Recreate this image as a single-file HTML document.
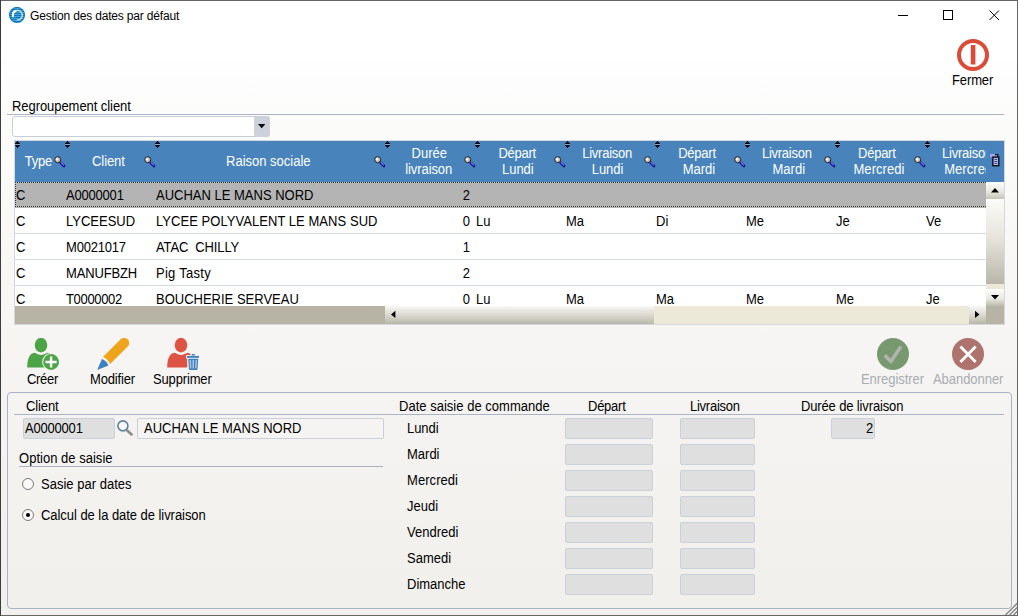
<!DOCTYPE html>
<html><head><meta charset="utf-8"><title>Gestion des dates par défaut</title>
<style>
*{box-sizing:border-box;margin:0;padding:0}
html,body{width:1018px;height:616px;overflow:hidden;background:linear-gradient(90deg,#3c3c40 0,#3c3c40 1px,#666 1px)}
body{font-family:"Liberation Sans",sans-serif;font-size:13px;color:#000;position:relative}
.abs{position:absolute}
#win{position:absolute;left:1px;top:1px;width:1016px;height:614px;background:linear-gradient(#fff 0,#fff 40px,#fbfbfa 130px,#f6f5f3 340px,#f4f3f1 430px,#f1f0ec 590px,#f1f0ec 614px)}
.t{position:absolute;white-space:nowrap;line-height:16px;height:16px;margin-top:1px;transform:scaleY(1.07);transform-origin:0 12.5px}
.hl{position:absolute;height:1px;background:#aab4c4}
.fld{position:absolute;height:21px;background:#dfdfdf;border:1px solid #c9d0da;border-radius:2px}
#hdr{position:absolute;left:15px;top:141px;width:989px;height:41px;background:#4884bb;color:#fff;overflow:hidden}
.hc{position:absolute;text-align:center;line-height:16px;height:16px;white-space:nowrap;color:#fff;transform:scaleY(1.07);transform-origin:0 12.5px}
.row{position:absolute;left:15px;width:971px;height:26px;background:#fff;border-bottom:1px solid #d3dae2;overflow:hidden}
.row span{position:absolute;top:6px;line-height:16px;height:16px;white-space:nowrap;transform:scaleY(1.07);transform-origin:0 12.5px}
</style></head><body>
<div id="win"></div>
<svg class="abs" style="left:9px;top:7px" width="16" height="16" viewBox="0 0 16 16"><defs><pattern id="st" width="16" height="2" patternUnits="userSpaceOnUse"><rect width="16" height="1" fill="#1577bd"/><rect y="1" width="16" height="1" fill="#3fa9da"/></pattern><clipPath id="ic"><circle cx="8" cy="8" r="8"/></clipPath></defs><circle cx="8" cy="8" r="8" fill="url(#st)"/><circle cx="8" cy="8" r="7.5" fill="none" stroke="#0f62a8" stroke-width="1" opacity=".55"/><path d="M3.8 9A4.8 4.8 0 1 1 7.7 12.9" fill="none" stroke="#fff" stroke-width="1.1" opacity=".9"/><path d="M4 9.2A4.6 4.6 0 0 1 6.6 4" fill="none" stroke="#fff" stroke-width="2" stroke-linecap="round"/></svg>
<div class="t" style="left:30px;top:7px;font-size:12px;letter-spacing:-0.18px">Gestion des dates par défaut</div>
<svg class="abs" style="left:890px;top:5px" width="120" height="22" viewBox="0 0 120 22" fill="none" stroke="#000" stroke-width="1"><path d="M8 10.5H18"/><rect x="53.5" y="5.5" width="9" height="9"/><path d="M99.5 5.5L109 15M109 5.5L99.5 15"/></svg>
<svg class="abs" style="left:957px;top:39px" width="32" height="32" viewBox="0 0 32 32"><circle cx="16" cy="16" r="14" fill="none" stroke="#dc4a38" stroke-width="4"/><rect x="13.8" y="6" width="4.6" height="19.5" fill="#dc4a38"/></svg>
<div class="t" style="left:952px;top:72px;letter-spacing:-0.12px">Fermer</div>
<div class="t" style="left:12px;top:98px;letter-spacing:-0.06px">Regroupement client</div>
<div class="hl" style="left:7px;top:114px;width:997px"></div>
<div class="abs" style="left:12px;top:116px;width:258px;height:21px;background:#fff;border:1px solid #c8ced8;border-radius:3px"></div>
<div class="abs" style="left:254px;top:116px;width:16px;height:21px;background:#cdd1d9;border-radius:3px"></div>
<svg class="abs" style="left:258px;top:124px" width="8" height="5"><path d="M0 0H7.4L3.7 4.2Z" fill="#000"/></svg>
<div class="abs" style="left:14px;top:140px;width:991px;height:185px;background:#d4d8de"></div>
<div id="hdr">
<svg class="abs" style="left:0px;top:0px" width="5" height="7" viewBox="0 0 5 7" shape-rendering="crispEdges"><path d="M2 0h1v1h1v1h1v1h-5v-1h1v-1h1z M0 4h5v1h-1v1h-1v1h-1v-1h-1v-1h-1z" fill="#0a0a14"/><path d="M0 3h5v1h-5z" fill="#8aa8c8"/></svg><svg class="abs" style="left:50px;top:0px" width="5" height="7" viewBox="0 0 5 7" shape-rendering="crispEdges"><path d="M2 0h1v1h1v1h1v1h-5v-1h1v-1h1z M0 4h5v1h-1v1h-1v1h-1v-1h-1v-1h-1z" fill="#0a0a14"/><path d="M0 3h5v1h-5z" fill="#8aa8c8"/></svg><svg class="abs" style="left:140px;top:0px" width="5" height="7" viewBox="0 0 5 7" shape-rendering="crispEdges"><path d="M2 0h1v1h1v1h1v1h-5v-1h1v-1h1z M0 4h5v1h-1v1h-1v1h-1v-1h-1v-1h-1z" fill="#0a0a14"/><path d="M0 3h5v1h-5z" fill="#8aa8c8"/></svg><svg class="abs" style="left:370px;top:0px" width="5" height="7" viewBox="0 0 5 7" shape-rendering="crispEdges"><path d="M2 0h1v1h1v1h1v1h-5v-1h1v-1h1z M0 4h5v1h-1v1h-1v1h-1v-1h-1v-1h-1z" fill="#0a0a14"/><path d="M0 3h5v1h-5z" fill="#8aa8c8"/></svg><svg class="abs" style="left:460px;top:0px" width="5" height="7" viewBox="0 0 5 7" shape-rendering="crispEdges"><path d="M2 0h1v1h1v1h1v1h-5v-1h1v-1h1z M0 4h5v1h-1v1h-1v1h-1v-1h-1v-1h-1z" fill="#0a0a14"/><path d="M0 3h5v1h-5z" fill="#8aa8c8"/></svg><svg class="abs" style="left:550px;top:0px" width="5" height="7" viewBox="0 0 5 7" shape-rendering="crispEdges"><path d="M2 0h1v1h1v1h1v1h-5v-1h1v-1h1z M0 4h5v1h-1v1h-1v1h-1v-1h-1v-1h-1z" fill="#0a0a14"/><path d="M0 3h5v1h-5z" fill="#8aa8c8"/></svg><svg class="abs" style="left:640px;top:0px" width="5" height="7" viewBox="0 0 5 7" shape-rendering="crispEdges"><path d="M2 0h1v1h1v1h1v1h-5v-1h1v-1h1z M0 4h5v1h-1v1h-1v1h-1v-1h-1v-1h-1z" fill="#0a0a14"/><path d="M0 3h5v1h-5z" fill="#8aa8c8"/></svg><svg class="abs" style="left:730px;top:0px" width="5" height="7" viewBox="0 0 5 7" shape-rendering="crispEdges"><path d="M2 0h1v1h1v1h1v1h-5v-1h1v-1h1z M0 4h5v1h-1v1h-1v1h-1v-1h-1v-1h-1z" fill="#0a0a14"/><path d="M0 3h5v1h-5z" fill="#8aa8c8"/></svg><svg class="abs" style="left:820px;top:0px" width="5" height="7" viewBox="0 0 5 7" shape-rendering="crispEdges"><path d="M2 0h1v1h1v1h1v1h-5v-1h1v-1h1z M0 4h5v1h-1v1h-1v1h-1v-1h-1v-1h-1z" fill="#0a0a14"/><path d="M0 3h5v1h-5z" fill="#8aa8c8"/></svg><svg class="abs" style="left:910px;top:0px" width="5" height="7" viewBox="0 0 5 7" shape-rendering="crispEdges"><path d="M2 0h1v1h1v1h1v1h-5v-1h1v-1h1z M0 4h5v1h-1v1h-1v1h-1v-1h-1v-1h-1z" fill="#0a0a14"/><path d="M0 3h5v1h-5z" fill="#8aa8c8"/></svg><div class="hc" style="left:-36.6px;top:13px;width:120px;letter-spacing:-0.23px">Type</div><div class="hc" style="left:33.4px;top:13px;width:120px;letter-spacing:-0.1px">Client</div><div class="hc" style="left:193.3px;top:13px;width:120px;letter-spacing:0px">Raison sociale</div><div class="hc" style="left:354.3px;top:5px;width:120px">Durée</div><div class="hc" style="left:353.7px;top:21px;width:120px;letter-spacing:-0.08px">livraison</div><div class="hc" style="left:442.2px;top:5px;width:120px;letter-spacing:-0.25px">Départ</div><div class="hc" style="left:442.8px;top:21px;width:120px;letter-spacing:-0.05px">Lundi</div><div class="hc" style="left:532.1px;top:5px;width:120px;letter-spacing:-0.25px">Livraison</div><div class="hc" style="left:532.5px;top:21px;width:120px;letter-spacing:-0.05px">Lundi</div><div class="hc" style="left:622.0px;top:5px;width:120px;letter-spacing:-0.25px">Départ</div><div class="hc" style="left:624.0px;top:21px;width:120px">Mardi</div><div class="hc" style="left:711.8px;top:5px;width:120px;letter-spacing:-0.25px">Livraison</div><div class="hc" style="left:713.8px;top:21px;width:120px">Mardi</div><div class="hc" style="left:801.8px;top:5px;width:120px;letter-spacing:-0.25px">Départ</div><div class="hc" style="left:804.0px;top:21px;width:120px;letter-spacing:0.06px">Mercredi</div><div class="hc" style="left:892.0px;top:5px;width:120px;letter-spacing:-0.25px">Livraison</div><div class="hc" style="left:894.7px;top:21px;width:120px;letter-spacing:0.06px">Mercredi</div><svg class="abs" style="left:39px;top:15px" width="12" height="12" viewBox="0 0 12 12"><path d="M5.6 5.6L10 10" stroke="#10103a" stroke-width="2.6" stroke-linecap="round"/><path d="M6 6L9.9 9.9" stroke="#1414e8" stroke-width="1.7" stroke-linecap="round"/><path d="M6.6 6L9.8 9.2" stroke="#fff" stroke-width=".7"/><circle cx="3.7" cy="3.7" r="3" fill="#c4c4c4" stroke="#222" stroke-width="1"/><circle cx="3.1" cy="3.1" r="1.3" fill="#f4f4f4"/></svg><svg class="abs" style="left:129px;top:15px" width="12" height="12" viewBox="0 0 12 12"><path d="M5.6 5.6L10 10" stroke="#10103a" stroke-width="2.6" stroke-linecap="round"/><path d="M6 6L9.9 9.9" stroke="#1414e8" stroke-width="1.7" stroke-linecap="round"/><path d="M6.6 6L9.8 9.2" stroke="#fff" stroke-width=".7"/><circle cx="3.7" cy="3.7" r="3" fill="#c4c4c4" stroke="#222" stroke-width="1"/><circle cx="3.1" cy="3.1" r="1.3" fill="#f4f4f4"/></svg><svg class="abs" style="left:359px;top:15px" width="12" height="12" viewBox="0 0 12 12"><path d="M5.6 5.6L10 10" stroke="#10103a" stroke-width="2.6" stroke-linecap="round"/><path d="M6 6L9.9 9.9" stroke="#1414e8" stroke-width="1.7" stroke-linecap="round"/><path d="M6.6 6L9.8 9.2" stroke="#fff" stroke-width=".7"/><circle cx="3.7" cy="3.7" r="3" fill="#c4c4c4" stroke="#222" stroke-width="1"/><circle cx="3.1" cy="3.1" r="1.3" fill="#f4f4f4"/></svg><svg class="abs" style="left:449px;top:15px" width="12" height="12" viewBox="0 0 12 12"><path d="M5.6 5.6L10 10" stroke="#10103a" stroke-width="2.6" stroke-linecap="round"/><path d="M6 6L9.9 9.9" stroke="#1414e8" stroke-width="1.7" stroke-linecap="round"/><path d="M6.6 6L9.8 9.2" stroke="#fff" stroke-width=".7"/><circle cx="3.7" cy="3.7" r="3" fill="#c4c4c4" stroke="#222" stroke-width="1"/><circle cx="3.1" cy="3.1" r="1.3" fill="#f4f4f4"/></svg><svg class="abs" style="left:539px;top:15px" width="12" height="12" viewBox="0 0 12 12"><path d="M5.6 5.6L10 10" stroke="#10103a" stroke-width="2.6" stroke-linecap="round"/><path d="M6 6L9.9 9.9" stroke="#1414e8" stroke-width="1.7" stroke-linecap="round"/><path d="M6.6 6L9.8 9.2" stroke="#fff" stroke-width=".7"/><circle cx="3.7" cy="3.7" r="3" fill="#c4c4c4" stroke="#222" stroke-width="1"/><circle cx="3.1" cy="3.1" r="1.3" fill="#f4f4f4"/></svg><svg class="abs" style="left:629px;top:15px" width="12" height="12" viewBox="0 0 12 12"><path d="M5.6 5.6L10 10" stroke="#10103a" stroke-width="2.6" stroke-linecap="round"/><path d="M6 6L9.9 9.9" stroke="#1414e8" stroke-width="1.7" stroke-linecap="round"/><path d="M6.6 6L9.8 9.2" stroke="#fff" stroke-width=".7"/><circle cx="3.7" cy="3.7" r="3" fill="#c4c4c4" stroke="#222" stroke-width="1"/><circle cx="3.1" cy="3.1" r="1.3" fill="#f4f4f4"/></svg><svg class="abs" style="left:719px;top:15px" width="12" height="12" viewBox="0 0 12 12"><path d="M5.6 5.6L10 10" stroke="#10103a" stroke-width="2.6" stroke-linecap="round"/><path d="M6 6L9.9 9.9" stroke="#1414e8" stroke-width="1.7" stroke-linecap="round"/><path d="M6.6 6L9.8 9.2" stroke="#fff" stroke-width=".7"/><circle cx="3.7" cy="3.7" r="3" fill="#c4c4c4" stroke="#222" stroke-width="1"/><circle cx="3.1" cy="3.1" r="1.3" fill="#f4f4f4"/></svg><svg class="abs" style="left:809px;top:15px" width="12" height="12" viewBox="0 0 12 12"><path d="M5.6 5.6L10 10" stroke="#10103a" stroke-width="2.6" stroke-linecap="round"/><path d="M6 6L9.9 9.9" stroke="#1414e8" stroke-width="1.7" stroke-linecap="round"/><path d="M6.6 6L9.8 9.2" stroke="#fff" stroke-width=".7"/><circle cx="3.7" cy="3.7" r="3" fill="#c4c4c4" stroke="#222" stroke-width="1"/><circle cx="3.1" cy="3.1" r="1.3" fill="#f4f4f4"/></svg><svg class="abs" style="left:899px;top:15px" width="12" height="12" viewBox="0 0 12 12"><path d="M5.6 5.6L10 10" stroke="#10103a" stroke-width="2.6" stroke-linecap="round"/><path d="M6 6L9.9 9.9" stroke="#1414e8" stroke-width="1.7" stroke-linecap="round"/><path d="M6.6 6L9.8 9.2" stroke="#fff" stroke-width=".7"/><circle cx="3.7" cy="3.7" r="3" fill="#c4c4c4" stroke="#222" stroke-width="1"/><circle cx="3.1" cy="3.1" r="1.3" fill="#f4f4f4"/></svg><div class="abs" style="left:971px;top:0;width:18px;height:41px;background:#4884bb"></div><svg class="abs" style="left:975px;top:13px" width="10" height="13" viewBox="0 0 10 13"><rect x="0" y="0" width="7.2" height="3.2" fill="#a4a4ec"/><path d="M5 .6H7.9V3" fill="none" stroke="#111" stroke-width="1.1"/><rect x="2.9" y="3.1" width="5.9" height="8.6" fill="#c4c4f6" stroke="#000" stroke-width="1.3"/><path d="M4.4 5.4H7.3M4.4 7.4H7.3M4.4 9.4H7.3" stroke="#2c2c9c" stroke-width="1"/></svg></div>
<div class="row" style="top:182px;height:26px;background:#b4b4b4;border-bottom:none;"><span style="left:1px">C</span><span style="left:51px;letter-spacing:-0.2px">A0000001</span><span style="left:141px">AUCHAN LE MANS NORD</span><span style="left:380px;width:75px;text-align:right">2</span></div>
<div class="row" style="top:208px;height:26px;"><span style="left:1px">C</span><span style="left:51px;letter-spacing:0px">LYCEESUD</span><span style="left:141px;letter-spacing:0.05px">LYCEE POLYVALENT LE MANS SUD</span><span style="left:380px;width:75px;text-align:right">0</span><span style="left:461px">Lu</span><span style="left:551px">Ma</span><span style="left:641px">Di</span><span style="left:731px">Me</span><span style="left:821px">Je</span><span style="left:911px">Ve</span></div>
<div class="row" style="top:234px;height:26px;"><span style="left:1px">C</span><span style="left:51px;letter-spacing:-0.2px">M0021017</span><span style="left:141px;letter-spacing:-0.12px">ATAC&nbsp; CHILLY</span><span style="left:380px;width:75px;text-align:right">1</span></div>
<div class="row" style="top:260px;height:26px;"><span style="left:1px">C</span><span style="left:51px;letter-spacing:-0.15px">MANUFBZH</span><span style="left:141px;letter-spacing:0.28px">Pig Tasty</span><span style="left:380px;width:75px;text-align:right">2</span></div>
<div class="row" style="top:286px;height:20px;border-bottom:none;"><span style="left:1px">C</span><span style="left:51px;letter-spacing:-0.34px">T0000002</span><span style="left:141px;letter-spacing:0px">BOUCHERIE SERVEAU</span><span style="left:380px;width:75px;text-align:right">0</span><span style="left:461px">Lu</span><span style="left:551px">Ma</span><span style="left:641px">Ma</span><span style="left:731px">Me</span><span style="left:821px">Me</span><span style="left:911px">Je</span></div>
<div class="abs" style="left:15px;top:182px;width:971px;height:1px;background:repeating-linear-gradient(90deg,#333 0 1px,#c8c4c0 1px 2px)"></div><div class="abs" style="left:15px;top:206px;width:971px;height:1px;background:repeating-linear-gradient(90deg,#333 0 1px,#c8c4c0 1px 2px)"></div><div class="abs" style="left:15px;top:182px;width:1px;height:25px;background:repeating-linear-gradient(#333 0 1px,#c8c4c0 1px 2px)"></div>
<div class="abs" style="left:15px;top:306px;width:370px;height:18px;background:#b7b4a6"></div>
<div class="abs" style="left:385px;top:306px;width:601px;height:18px;background:#ece9d8"></div>
<div class="abs" style="left:385px;top:306px;width:17px;height:18px;background:linear-gradient(#f8f8f5,#e3e1da 35%,#d0cdc3 68%,#b9b6a9)"></div>
<div class="abs" style="left:402px;top:306px;width:252px;height:18px;background:linear-gradient(#f8f8f5,#e3e1da 35%,#d0cdc3 68%,#b9b6a9)"></div>
<div class="abs" style="left:969px;top:306px;width:17px;height:18px;background:linear-gradient(#f8f8f5,#e3e1da 35%,#d0cdc3 68%,#b9b6a9)"></div>
<svg class="abs" style="left:391px;top:310px" width="5" height="9"><path d="M4.4 .7V8.1L0 4.4Z" fill="#000"/></svg>
<svg class="abs" style="left:975px;top:310px" width="5" height="9"><path d="M0 .7V8.1L4.4 4.4Z" fill="#000"/></svg>
<div class="abs" style="left:986px;top:306px;width:18px;height:18px;background:#b7b4a6"></div>
<div class="abs" style="left:986px;top:182px;width:18px;height:124px;background:#ece9d8"></div>
<div class="abs" style="left:986px;top:182px;width:18px;height:17px;background:linear-gradient(#fdfdfc,#ebe9e2 55%,#c6c3b6)"></div>
<div class="abs" style="left:986px;top:199px;width:18px;height:85px;background:linear-gradient(#fbfbf9,#e6e4dc 45%,#b9b6a9)"></div>
<div class="abs" style="left:986px;top:289px;width:18px;height:17px;background:linear-gradient(#fdfdfc,#ebe9e2 55%,#bcb9ac)"></div>
<svg class="abs" style="left:991px;top:188px" width="8" height="5"><path d="M0 4.5H8L4 0Z" fill="#000"/></svg>
<svg class="abs" style="left:991px;top:295px" width="8" height="5"><path d="M0 0H8L4 4.5Z" fill="#000"/></svg>
<svg class="abs" style="left:27px;top:338px" width="34" height="33" viewBox="0 0 34 33"><ellipse cx="14" cy="7.1" rx="6.3" ry="7.3" fill="#4da447"/><path d="M0.2 29.5C0.4 21 2.2 15.4 7.7 14.8Q14 19 20.5 14.8C25.5 15.4 27.6 21 27.8 29.5Z" fill="#4da447"/><circle cx="24.1" cy="24" r="8.9" fill="#f6f5f3"/><circle cx="24.1" cy="24" r="7.9" fill="#4da447"/><path d="M24.1 18.4V29.6M18.5 24H29.7" stroke="#fff" stroke-width="2.4"/></svg>
<svg class="abs" style="left:97px;top:338px" width="34" height="33" viewBox="0 0 34 33"><path d="M6 18.9L23.63 1.28A5.05 5.05 0 0 1 30.77 8.42L13.1 26.1Q11 21 6 18.9Z" fill="#eea51b"/><path d="M0.2 31.9L4.9 20.9Q9.5 22.5 11.4 27.4Z" fill="#3f80bf"/></svg>
<svg class="abs" style="left:167px;top:338px" width="34" height="33" viewBox="0 0 34 33"><ellipse cx="14" cy="7.1" rx="6.3" ry="7.3" fill="#de5444"/><path d="M0.2 29.5C0.4 21 2.2 15.4 7.7 14.8Q14 19 20.5 14.8C25.5 15.4 27.6 21 27.8 29.5Z" fill="#de5444"/><path d="M19.2 16.9H23.7V15H28.8V16.9H33V33H20.2V20.6H19.2Z" fill="#f6f5f3"/><rect x="24.7" y="16" width="3.1" height="1.4" rx=".5" fill="#3f80bf"/><rect x="20.1" y="17.9" width="11.9" height="1.9" fill="#3f80bf"/><path d="M21.3 20.7H31.2L30.6 30.9Q30.5 31.9 29.5 31.9H23Q22 31.9 21.9 30.9Z" fill="#3f80bf"/><path d="M23.3 22L23.7 30.4M26.25 22V30.4M29.2 22L28.8 30.4" stroke="#a9c3e2" stroke-width="1.5"/></svg>
<svg class="abs" style="left:877px;top:338px" width="32" height="32" viewBox="0 0 32 32"><circle cx="16" cy="16" r="16" fill="#78996f"/><path d="M7.8 17.2L13.9 23.6L23.9 8.6" fill="none" stroke="#b2b2ae" stroke-width="3.6" stroke-linejoin="round"/></svg>
<svg class="abs" style="left:952px;top:338px" width="32" height="32" viewBox="0 0 32 32"><circle cx="16" cy="16" r="16" fill="#ad736c"/><path d="M8.4 8.6L23.7 23.9M23.7 8.6L8.4 23.9" fill="none" stroke="#fff" stroke-width="2.8"/></svg>
<div class="t" style="left:27px;top:371px;letter-spacing:-0.3px">Créer</div>
<div class="t" style="left:90px;top:371px;letter-spacing:-0.17px">Modifier</div>
<div class="t" style="left:153px;top:371px;letter-spacing:-0.15px">Supprimer</div>
<div class="t" style="left:861px;top:371px;color:#a9acb2;letter-spacing:-0.05px">Enregistrer</div>
<div class="t" style="left:933px;top:371px;color:#a9acb2;letter-spacing:-0.05px">Abandonner</div>
<div class="abs" style="left:7px;top:392px;width:1005px;height:217px;border:1px solid #a8b4c4;border-radius:4px"></div>
<div class="t" style="left:26px;top:398px;letter-spacing:-0.1px">Client</div>
<div class="hl" style="left:14px;top:414px;width:990px"></div>
<div class="t" style="left:399px;top:398px;letter-spacing:0.02px">Date saisie de commande</div>
<div class="t" style="left:588px;top:398px;letter-spacing:-0.25px">Départ</div>
<div class="t" style="left:690px;top:398px;letter-spacing:-0.25px">Livraison</div>
<div class="t" style="left:801px;top:398px;letter-spacing:-0.14px">Durée de livraison</div>
<div class="fld" style="left:23px;top:418px;width:92px"></div>
<div class="t" style="left:25px;top:420px;letter-spacing:-0.2px">A0000001</div>
<svg class="abs" style="left:116px;top:419px" width="19" height="19" viewBox="0 0 19 19"><path d="M11.4 11.7L15.6 15.4" stroke="#8c8c8c" stroke-width="2.7" stroke-linecap="round"/><circle cx="6.9" cy="6.9" r="5" fill="#f8f8f6" stroke="#5c80a2" stroke-width="1.6"/></svg>
<div class="fld" style="left:137px;top:418px;width:247px;background:#f5f4f2"></div>
<div class="t" style="left:144px;top:420px">AUCHAN LE MANS NORD</div>
<div class="t" style="left:19px;top:450px;letter-spacing:0.02px">Option de saisie</div>
<div class="hl" style="left:19px;top:466px;width:364px"></div>
<div class="abs" style="left:22px;top:478px;width:12px;height:12px;border:1px solid #7c7c7c;border-radius:50%;background:#f9f9f8"></div>
<div class="t" style="left:41px;top:476px;letter-spacing:0.02px">Sasie par dates</div>
<div class="abs" style="left:22px;top:509px;width:12px;height:12px;border:1px solid #7c7c7c;border-radius:50%;background:#f9f9f8"></div>
<div class="abs" style="left:26px;top:513px;width:4px;height:4px;border-radius:50%;background:#000"></div>
<div class="t" style="left:41px;top:507px;letter-spacing:-0.05px">Calcul de la date de livraison</div>
<div class="t" style="left:407px;top:420px;letter-spacing:-0.05px">Lundi</div><div class="fld" style="left:565px;top:418px;width:88px"></div><div class="fld" style="left:680px;top:418px;width:75px"></div>
<div class="t" style="left:407px;top:446px">Mardi</div><div class="fld" style="left:565px;top:444px;width:88px"></div><div class="fld" style="left:680px;top:444px;width:75px"></div>
<div class="t" style="left:407px;top:472px;letter-spacing:0.06px">Mercredi</div><div class="fld" style="left:565px;top:470px;width:88px"></div><div class="fld" style="left:680px;top:470px;width:75px"></div>
<div class="t" style="left:407px;top:498px">Jeudi</div><div class="fld" style="left:565px;top:496px;width:88px"></div><div class="fld" style="left:680px;top:496px;width:75px"></div>
<div class="t" style="left:407px;top:524px">Vendredi</div><div class="fld" style="left:565px;top:522px;width:88px"></div><div class="fld" style="left:680px;top:522px;width:75px"></div>
<div class="t" style="left:407px;top:550px">Samedi</div><div class="fld" style="left:565px;top:548px;width:88px"></div><div class="fld" style="left:680px;top:548px;width:75px"></div>
<div class="t" style="left:407px;top:576px">Dimanche</div><div class="fld" style="left:565px;top:574px;width:88px"></div><div class="fld" style="left:680px;top:574px;width:75px"></div>
<div class="fld" style="left:831px;top:418px;width:44px"></div>
<div class="t" style="left:866px;top:420px">2</div>
<svg class="abs" style="left:1004px;top:602px" width="13" height="13" viewBox="0 0 13 13"><path d="M2 14L14 2M6 14L14 6M10 14L14 10" stroke="#fff" stroke-width="1.6"/><path d="M.6 14L14 .6M4.6 14L14 4.6M8.6 14L14 8.6" stroke="#8c8c8c" stroke-width="1.5"/></svg>
</body></html>
